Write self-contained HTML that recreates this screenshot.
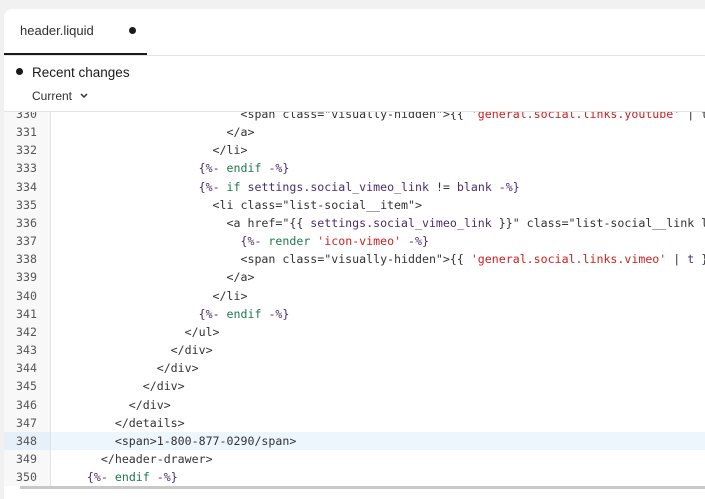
<!DOCTYPE html>
<html><head><meta charset="utf-8"><style>
body{margin:0;width:705px;height:489px;background:#f1f1f1;overflow:hidden;font-family:"Liberation Sans",sans-serif;position:relative}
.panel{position:absolute;left:4px;top:9px;width:720px;height:490px;background:#fff;border-radius:8px 0 0 0;overflow:hidden}
.tab{position:absolute;left:0;top:0;width:143px;height:44px;border-bottom:2px solid #1a1a1a;}
.tab span{position:absolute;left:16px;top:14px;font-size:13px;color:#303030}
.tab i{position:absolute;left:125px;top:18px;width:7px;height:7px;border-radius:50%;background:#1a1a1a}
.sep{position:absolute;left:0;top:46px;width:100%;height:1px;background:#e3e3e3}
.rc{position:absolute;left:12px;top:56px;font-size:13.5px;color:#1a1a1a}
.rc i{display:inline-block;width:7px;height:7px;border-radius:50%;background:#1a1a1a;margin-right:9px;vertical-align:2px}
.cur{position:absolute;left:28px;top:80px;font-size:12px;color:#303030}
.sep2{position:absolute;left:0;top:102px;width:100%;height:1px;background:#e3e3e3}
.code{position:absolute;left:0;top:103px;width:100%;height:378px;overflow:hidden}
.lines{position:absolute;left:0;top:-7px;width:100%}
.l{height:18.16px;line-height:18.16px;position:relative;font-family:"DejaVu Sans Mono",monospace;font-size:11.6px;white-space:pre;color:#333}
.l .n{position:absolute;left:0;width:46px;height:100%;background:#f8f8f8;border-right:1px solid #e3e3e3;color:#555;text-indent:12px}
.l .c{position:absolute;left:55px}
.hl{background:#eef6fd}.hl .n{background:#e6f0fa}
.k{color:#1c7a4d}.p{color:#4a2d72}.s{color:#d0201e}
.sb{position:absolute;left:20px;top:486px;width:690px;height:3px;background:#c8c8c8}
</style></head><body>
<div class="panel">
<div class="tab"><span>header.liquid</span><i></i></div>
<div class="sep"></div>
<div class="rc"><i></i>Recent changes</div>
<div class="cur">Current <svg width="10" height="8" viewBox="0 0 10 8" style="margin-left:4px"><path d="M2 2l3 3 3-3" fill="none" stroke="#303030" stroke-width="1.5"/></svg></div>
<div class="sep2"></div>
<div class="code"><div class="lines">
<div class="l"><span class="n">330</span><span class="c">                          &lt;span class="visually-hidden"&gt;{{ <span class="s">'general.social.links.youtube'</span> | t }}</span></div>
<div class="l"><span class="n">331</span><span class="c">                        &lt;/a&gt;</span></div>
<div class="l"><span class="n">332</span><span class="c">                      &lt;/li&gt;</span></div>
<div class="l"><span class="n">333</span><span class="c">                    <span class="p">{%-</span> <span class="k">endif</span> <span class="p">-%}</span></span></div>
<div class="l"><span class="n">334</span><span class="c">                    <span class="p">{%-</span> <span class="k">if</span> <span class="p">settings.social_vimeo_link</span> != <span class="p">blank</span> <span class="p">-%}</span></span></div>
<div class="l"><span class="n">335</span><span class="c">                      &lt;li class="list-social__item"&gt;</span></div>
<div class="l"><span class="n">336</span><span class="c">                        &lt;a href="{{ <span class="p">settings.social_vimeo_link</span> }}" class="list-social__link link"&gt;</span></div>
<div class="l"><span class="n">337</span><span class="c">                          <span class="p">{%-</span> <span class="k">render</span> <span class="s">'icon-vimeo'</span> <span class="p">-%}</span></span></div>
<div class="l"><span class="n">338</span><span class="c">                          &lt;span class="visually-hidden"&gt;{{ <span class="s">'general.social.links.vimeo'</span> | <span class="p">t</span> }}</span></div>
<div class="l"><span class="n">339</span><span class="c">                        &lt;/a&gt;</span></div>
<div class="l"><span class="n">340</span><span class="c">                      &lt;/li&gt;</span></div>
<div class="l"><span class="n">341</span><span class="c">                    <span class="p">{%-</span> <span class="k">endif</span> <span class="p">-%}</span></span></div>
<div class="l"><span class="n">342</span><span class="c">                  &lt;/ul&gt;</span></div>
<div class="l"><span class="n">343</span><span class="c">                &lt;/div&gt;</span></div>
<div class="l"><span class="n">344</span><span class="c">              &lt;/div&gt;</span></div>
<div class="l"><span class="n">345</span><span class="c">            &lt;/div&gt;</span></div>
<div class="l"><span class="n">346</span><span class="c">          &lt;/div&gt;</span></div>
<div class="l"><span class="n">347</span><span class="c">        &lt;/details&gt;</span></div>
<div class="l hl"><span class="n">348</span><span class="c">        &lt;span&gt;1-800-877-0290/span&gt;</span></div>
<div class="l"><span class="n">349</span><span class="c">      &lt;/header-drawer&gt;</span></div>
<div class="l"><span class="n">350</span><span class="c">    <span class="p">{%-</span> <span class="k">endif</span> <span class="p">-%}</span></span></div>
</div></div>
</div>
<div class="sb"></div>
</body></html>
